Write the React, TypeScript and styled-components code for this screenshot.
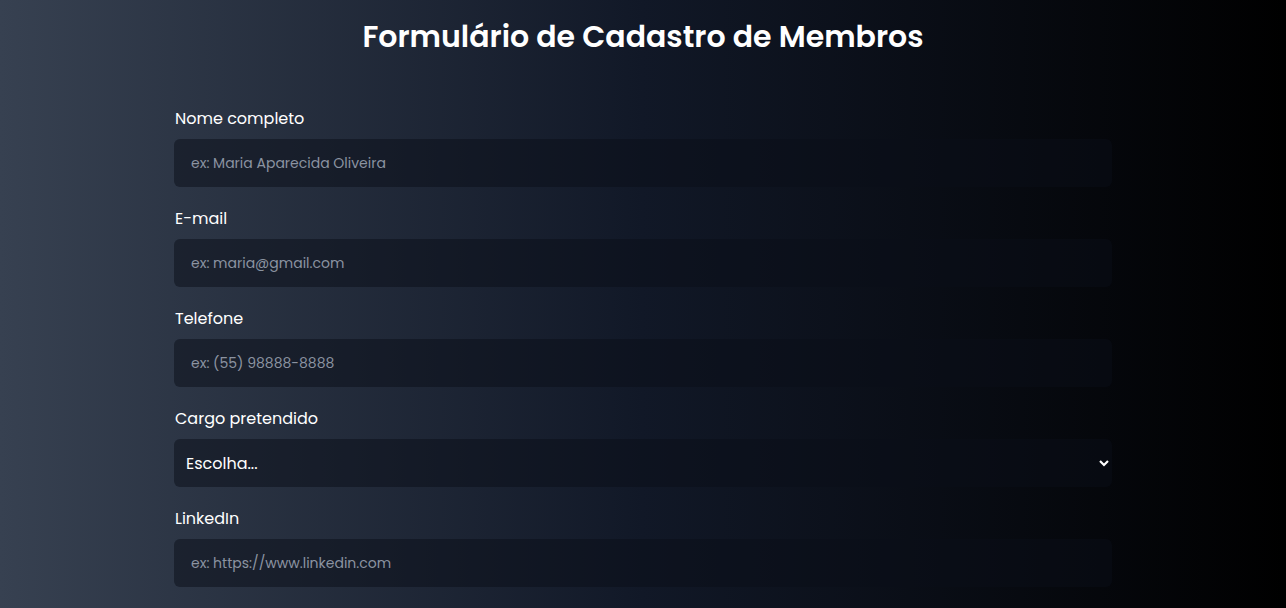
import React from "react";
import styled, { createGlobalStyle } from "styled-components";

const Global = createGlobalStyle`
  html, body { margin: 0; padding: 0; }
  body {
    font-family: "Poppins", "Inter", "Liberation Sans", sans-serif;
    min-height: 100vh;
    background: linear-gradient(to right, #374151, #111827, #000000);
    color: #ffffff;
  }
  * { box-sizing: border-box; }
`;

const Page = styled.main`
  min-height: 100vh;
  display: flex;
  flex-direction: column;
  align-items: center;
  padding-top: 19px;
`;

const Title = styled.h1`
  margin: 0;
  font-size: 30px;
  line-height: 36px;
  font-weight: 600;
  color: #ffffff;
  text-align: center;
`;

const Form = styled.form`
  width: 938px;
  margin-top: 52px;
  display: flex;
  flex-direction: column;
  gap: 20px;
`;

const Field = styled.div`
  display: flex;
  flex-direction: column;
  gap: 8px;
`;

const Label = styled.label`
  font-size: 16px;
  line-height: 24px;
  font-weight: 400;
  color: #ffffff;
  padding-left: 1px;
`;

const Input = styled.input`
  width: 100%;
  height: 48px;
  border: none;
  border-radius: 6px;
  background: rgba(10, 14, 24, 0.5);
  padding: 0 16px 0 17px;
  font-family: inherit;
  font-size: 14px;
  color: #ffffff;
  outline: none;
  &::placeholder { color: #8b93a1; }
`;

const SelectWrap = styled.div`
  position: relative;
`;

const Select = styled.select`
  width: 100%;
  height: 48px;
  border: none;
  border-radius: 6px;
  background: rgba(10, 14, 24, 0.5);
  padding: 0 12px 0 12px;
  font-family: inherit;
  font-size: 16px;
  color: #ffffff;
  appearance: none;
  outline: none;
  option { background: #111827; color: #fff; }
`;

const Chevron = styled.svg`
  position: absolute;
  right: 2px;
  top: 19px;
  width: 12px;
  height: 10px;
  pointer-events: none;
`;

export default function App() {
  return (
    <>
      <Global />
      <Page>
        <Title>Formulário de Cadastro de Membros</Title>
        <Form onSubmit={(e) => e.preventDefault()}>
          <Field>
            <Label htmlFor="nome">Nome completo</Label>
            <Input id="nome" placeholder="ex: Maria Aparecida Oliveira" />
          </Field>
          <Field>
            <Label htmlFor="email">E-mail</Label>
            <Input id="email" placeholder="ex: maria@gmail.com" />
          </Field>
          <Field>
            <Label htmlFor="tel">Telefone</Label>
            <Input id="tel" placeholder="ex: (55) 98888-8888" />
          </Field>
          <Field>
            <Label htmlFor="cargo">Cargo pretendido</Label>
            <SelectWrap>
              <Select id="cargo" defaultValue="">
                <option value="">Escolha...</option>
                <option value="dev">Desenvolvedor</option>
                <option value="design">Designer</option>
              </Select>
              <Chevron viewBox="0 0 12 10">
                <path d="M2 3 L6 7 L10 3" stroke="#fff" strokeWidth="2.2" fill="none" />
              </Chevron>
            </SelectWrap>
          </Field>
          <Field>
            <Label htmlFor="linkedin">LinkedIn</Label>
            <Input id="linkedin" placeholder="ex: https://www.linkedin.com" />
          </Field>
        </Form>
      </Page>
    </>
  );
}
